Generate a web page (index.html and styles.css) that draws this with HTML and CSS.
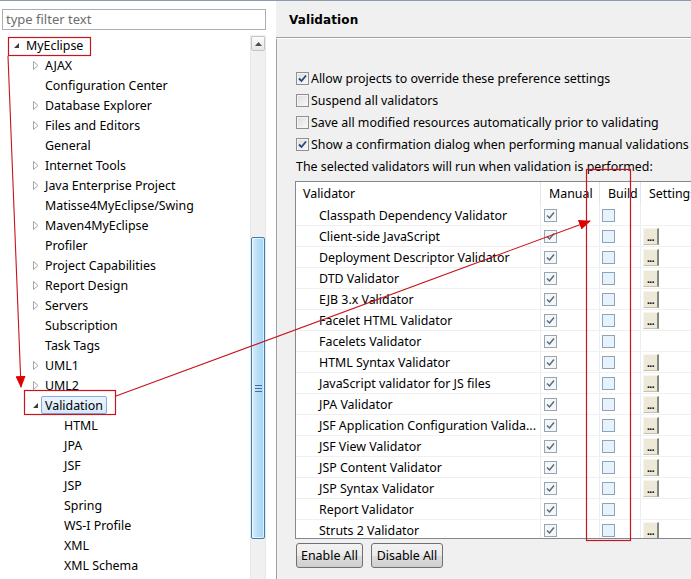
FILE: index.html
```html
<!DOCTYPE html>
<html>
<head>
<meta charset="utf-8">
<link rel="stylesheet" href="styles.css">
</head>
<body>
<div class="window">
  <aside class="nav">
    <div class="filter">type filter text</div>
    <div class="tree-wrap">
      <ul class="tree">
        <li class="row lvl0"><span class="twisty"><svg class="tw-open" width="7" height="7" viewBox="0 0 7 7"><path d="M6 1 L6 6 L1 6 Z" fill="#3c3c3c"/></svg></span><span class="lbl">MyEclipse</span></li>
        <li class="row lvl1"><span class="twisty"><svg class="tw-closed" width="6" height="9" viewBox="0 0 6 9"><path d="M0.5 0.5 L5 4.5 L0.5 8.5 Z" fill="#fff" stroke="#a5a5a5"/></svg></span><span class="lbl">AJAX</span></li>
        <li class="row lvl1"><span class="twisty"></span><span class="lbl">Configuration Center</span></li>
        <li class="row lvl1"><span class="twisty"><svg class="tw-closed" width="6" height="9" viewBox="0 0 6 9"><path d="M0.5 0.5 L5 4.5 L0.5 8.5 Z" fill="#fff" stroke="#a5a5a5"/></svg></span><span class="lbl">Database Explorer</span></li>
        <li class="row lvl1"><span class="twisty"><svg class="tw-closed" width="6" height="9" viewBox="0 0 6 9"><path d="M0.5 0.5 L5 4.5 L0.5 8.5 Z" fill="#fff" stroke="#a5a5a5"/></svg></span><span class="lbl">Files and Editors</span></li>
        <li class="row lvl1"><span class="twisty"></span><span class="lbl">General</span></li>
        <li class="row lvl1"><span class="twisty"><svg class="tw-closed" width="6" height="9" viewBox="0 0 6 9"><path d="M0.5 0.5 L5 4.5 L0.5 8.5 Z" fill="#fff" stroke="#a5a5a5"/></svg></span><span class="lbl">Internet Tools</span></li>
        <li class="row lvl1"><span class="twisty"><svg class="tw-closed" width="6" height="9" viewBox="0 0 6 9"><path d="M0.5 0.5 L5 4.5 L0.5 8.5 Z" fill="#fff" stroke="#a5a5a5"/></svg></span><span class="lbl">Java Enterprise Project</span></li>
        <li class="row lvl1"><span class="twisty"></span><span class="lbl">Matisse4MyEclipse/Swing</span></li>
        <li class="row lvl1"><span class="twisty"><svg class="tw-closed" width="6" height="9" viewBox="0 0 6 9"><path d="M0.5 0.5 L5 4.5 L0.5 8.5 Z" fill="#fff" stroke="#a5a5a5"/></svg></span><span class="lbl">Maven4MyEclipse</span></li>
        <li class="row lvl1"><span class="twisty"></span><span class="lbl">Profiler</span></li>
        <li class="row lvl1"><span class="twisty"><svg class="tw-closed" width="6" height="9" viewBox="0 0 6 9"><path d="M0.5 0.5 L5 4.5 L0.5 8.5 Z" fill="#fff" stroke="#a5a5a5"/></svg></span><span class="lbl">Project Capabilities</span></li>
        <li class="row lvl1"><span class="twisty"><svg class="tw-closed" width="6" height="9" viewBox="0 0 6 9"><path d="M0.5 0.5 L5 4.5 L0.5 8.5 Z" fill="#fff" stroke="#a5a5a5"/></svg></span><span class="lbl">Report Design</span></li>
        <li class="row lvl1"><span class="twisty"><svg class="tw-closed" width="6" height="9" viewBox="0 0 6 9"><path d="M0.5 0.5 L5 4.5 L0.5 8.5 Z" fill="#fff" stroke="#a5a5a5"/></svg></span><span class="lbl">Servers</span></li>
        <li class="row lvl1"><span class="twisty"></span><span class="lbl">Subscription</span></li>
        <li class="row lvl1"><span class="twisty"></span><span class="lbl">Task Tags</span></li>
        <li class="row lvl1"><span class="twisty"><svg class="tw-closed" width="6" height="9" viewBox="0 0 6 9"><path d="M0.5 0.5 L5 4.5 L0.5 8.5 Z" fill="#fff" stroke="#a5a5a5"/></svg></span><span class="lbl">UML1</span></li>
        <li class="row lvl1"><span class="twisty"><svg class="tw-closed" width="6" height="9" viewBox="0 0 6 9"><path d="M0.5 0.5 L5 4.5 L0.5 8.5 Z" fill="#fff" stroke="#a5a5a5"/></svg></span><span class="lbl">UML2</span></li>
        <li class="row lvl1"><span class="twisty"><svg class="tw-open" width="7" height="7" viewBox="0 0 7 7"><path d="M6 1 L6 6 L1 6 Z" fill="#3c3c3c"/></svg></span><span class="lbl selected">Validation</span></li>
        <li class="row lvl2"><span class="lbl">HTML</span></li>
        <li class="row lvl2"><span class="lbl">JPA</span></li>
        <li class="row lvl2"><span class="lbl">JSF</span></li>
        <li class="row lvl2"><span class="lbl">JSP</span></li>
        <li class="row lvl2"><span class="lbl">Spring</span></li>
        <li class="row lvl2"><span class="lbl">WS-I Profile</span></li>
        <li class="row lvl2"><span class="lbl">XML</span></li>
        <li class="row lvl2"><span class="lbl">XML Schema</span></li>
      </ul>
      <div class="vscroll">
        <div class="sb-up"><svg width="7" height="4" viewBox="0 0 7 4"><path d="M0 4 L3.5 0 L7 4 Z" fill="#4d4d4d"/></svg></div>
        <div class="sb-thumb"><span class="grip"></span></div>
      </div>
    </div>
  </aside>

  <main class="page">
    <header class="page-head"><h1 class="page-title">Validation</h1></header>
    <div class="page-body">
      <div class="opt"><span class="cb checked"><svg width="9" height="9" viewBox="0 0 9 9"><path d="M1 4.5 L3.5 7 L8 1.5" fill="none" stroke="#24487a" stroke-width="1.8"/></svg></span>Allow projects to override these preference settings</div>
      <div class="opt"><span class="cb"></span>Suspend all validators</div>
      <div class="opt"><span class="cb"></span>Save all modified resources automatically prior to validating</div>
      <div class="opt"><span class="cb checked"><svg width="9" height="9" viewBox="0 0 9 9"><path d="M1 4.5 L3.5 7 L8 1.5" fill="none" stroke="#24487a" stroke-width="1.8"/></svg></span>Show a confirmation dialog when performing manual validations</div>
      <div class="opt">The selected validators will run when validation is performed:</div>

      <div class="table">
        <div class="thead">
          <div class="th">Validator</div>
          <div class="th">Manual</div>
          <div class="th">Build</div>
          <div class="th">Settings</div>
        </div>
        <div class="tbody" id="tbody"></div>
      </div>

      <div class="actions">
        <button class="btn">Enable All</button>
        <button class="btn">Disable All</button>
      </div>
    </div>
  </main>

  <svg class="annot" width="691" height="579" viewBox="0 0 691 579">
    <defs>
      <marker id="ah" markerWidth="12" markerHeight="10" refX="11" refY="5" orient="auto" markerUnits="userSpaceOnUse">
        <path d="M0 0 L12 5 L0 10 Z" fill="#e00000"/>
      </marker>
    </defs>
    <rect x="8.5" y="37.5" width="82" height="18" fill="none" stroke="#c8141e" stroke-width="1.2"/>
    <line x1="8" y1="56" x2="21" y2="387" stroke="#c8141e" stroke-width="1.1" marker-end="url(#ah)"/>
    <rect x="24.5" y="390.5" width="91" height="24" fill="none" stroke="#c8141e" stroke-width="1.2"/>
    <line x1="116" y1="396" x2="590" y2="221" stroke="#c8141e" stroke-width="1.1" marker-end="url(#ah)"/>
    <rect x="586.5" y="169.5" width="44" height="371" fill="none" stroke="#c8141e" stroke-width="1.2"/>
  </svg>
</div>
<script src="app.js"></script>
</body>
</html>
```

FILE: app.js
```js
var rows = [
  ["Classpath Dependency Validator", false],
  ["Client-side JavaScript", true],
  ["Deployment Descriptor Validator", true],
  ["DTD Validator", true],
  ["EJB 3.x Validator", true],
  ["Facelet HTML Validator", true],
  ["Facelets Validator", false],
  ["HTML Syntax Validator", true],
  ["JavaScript validator for JS files", true],
  ["JPA Validator", true],
  ["JSF Application Configuration Valida...", true],
  ["JSF View Validator", true],
  ["JSP Content Validator", true],
  ["JSP Syntax Validator", true],
  ["Report Validator", false],
  ["Struts 2 Validator", true]
];
var check = '<svg width="9" height="9" viewBox="0 0 9 9"><path d="M1 4.5 L3.5 7 L8 1.5" fill="none" stroke="#5b6b7c" stroke-width="1.5"/></svg>';
var html = "";
rows.forEach(function (r) {
  html += '<div class="tr">' +
    '<div class="td name">' + r[0] + '</div>' +
    '<div class="td"><span class="tcb on">' + check + '</span></div>' +
    '<div class="td"><span class="tcb off"></span></div>' +
    '<div class="td">' + (r[1] ? '<span class="dots">...</span>' : '') + '</div>' +
    '</div>';
});
document.getElementById("tbody").innerHTML = html;
```

FILE: styles.css
```css
* { box-sizing: border-box; }
html, body { margin: 0; padding: 0; }
body {
  width: 691px;
  height: 579px;
  overflow: hidden;
  font-family: "Noto Sans", "Open Sans", sans-serif;
  font-size: 12.4px;
  color: #000;
  background: #f0f0f0;
}
.window {
  position: relative;
  display: flex;
  width: 691px;
  height: 579px;
  border-top: 1px solid #8c9cac;
}

/* ---------- left navigation ---------- */
.nav {
  width: 276px;
  flex: none;
  background: #fff;
  padding-top: 8px;
  display: flex;
  flex-direction: column;
}
.filter {
  margin-left: 2px;
  width: 264px;
  height: 21px;
  border: 1px solid #abadb3;
  padding-left: 3px;
  line-height: 19px;
  font-size: 13px;
  color: #6d6d6d;
}
.tree-wrap {
  margin-top: 5px;
  flex: 1;
  display: flex;
  min-height: 0;
}
.tree {
  list-style: none;
  margin: 0;
  padding: 0;
  width: 250px;
}
.row {
  height: 20px;
  display: flex;
  align-items: center;
  white-space: nowrap;
  font-size: 12.4px;
}
.lvl0 { padding-left: 12px; }
.lvl1 { padding-left: 31px; }
.lvl2 { padding-left: 64px; }
.twisty {
  width: 14px;
  flex: none;
  display: flex;
  align-items: center;
}
.lvl0 .twisty { padding-left: 1px; }
.lvl1 .twisty { padding-left: 2px; }
.lvl1 .twisty .tw-open { margin-left: -1px; }
.lbl { line-height: 16px; padding-top: 1px; }
.lbl.selected {
  margin-left: -4px;
  padding: 1px 3px 0;
  height: 18px;
  line-height: 16px;
  border: 1px solid #84acdd;
  border-radius: 2px;
  background: linear-gradient(#ebf4fd, #d9e9fb);
}

.vscroll {
  width: 16px;
  flex: none;
  background: #f0f0f0;
  border-left: 1px solid #e8e8e8;
  border-right: 1px solid #e8e8e8;
  display: flex;
  flex-direction: column;
  align-items: center;
}
.sb-up {
  margin-top: 1px;
  width: 14px;
  height: 15px;
  border: 1px solid #c5c5c5;
  border-radius: 2px;
  background: linear-gradient(#fdfdfd, #e6e6e6);
  display: flex;
  align-items: center;
  justify-content: center;
}
.sb-thumb {
  margin-top: 186px;
  width: 14px;
  height: 302px;
  border: 1px solid #3c7fb1;
  border-radius: 2px;
  background: linear-gradient(90deg, #d9edfb, #b8def7 50%, #a9d5f4);
  box-shadow: inset 0 0 0 1px rgba(255,255,255,0.6);
  display: flex;
  align-items: center;
  justify-content: center;
}
.grip {
  width: 7px;
  height: 7px;
  border-top: 1px solid #3d6e99;
  border-bottom: 1px solid #3d6e99;
  background: linear-gradient(#3d6e99, #3d6e99) center / 100% 1px no-repeat;
}

/* ---------- right page ---------- */
.page {
  flex: 1;
  min-width: 0;
  display: flex;
  flex-direction: column;
}
.page-head {
  height: 37px;
  flex: none;
  border-bottom: 1px solid #a0a0a0;
  box-shadow: 0 1px 0 #fff;
  padding-left: 13px;
  display: flex;
  align-items: center;
  padding-top: 1px;
}
.page-title {
  margin: 0;
  font-family: "DejaVu Sans", sans-serif;
  font-weight: bold;
  font-size: 12px;
  letter-spacing: 0.1px;
}
.page-body {
  flex: 1;
  margin-top: 1px;
  border-left: 1px solid #a0a0a0;
  padding-left: 19px;
  padding-top: 28px;
  overflow: hidden;
}
.opt {
  height: 22px;
  display: flex;
  align-items: center;
  white-space: nowrap;
  font-size: 12.4px;
}
.cb {
  width: 13px;
  height: 13px;
  flex: none;
  margin-right: 2px;
  border: 1px solid #8f8f8f;
  background: linear-gradient(135deg, #dcdcdc, #fafafa);
  box-shadow: inset 0 0 0 1px #f4f4f4;
  display: flex;
  align-items: center;
  justify-content: center;
}

/* ---------- table ---------- */
.table {
  margin-top: 4px;
  margin-left: -1px;
  width: 430px;
  height: 358px;
  border: 1px solid #828790;
  background: #fff;
  overflow: hidden;
}
.thead, .tr {
  display: grid;
  grid-template-columns: 245px 59px 41px 84px;
}
.thead { height: 23px; }
.th {
  padding-left: 7px;
  padding-top: 1px;
  line-height: 22px;
  border-right: 1px solid #e5e5e5;
  white-space: nowrap;
}
.th + .th { padding-left: 8px; }
.tr {
  height: 21px;
  border-bottom: 1px solid #f0f0f0;
}
.td {
  border-right: 1px solid #e9eef5;
  display: flex;
  align-items: center;
  padding-left: 2px;
  white-space: nowrap;
  overflow: hidden;
}
.td.name { padding-left: 23px; padding-top: 1px; }
.tr .td:nth-child(2) { padding-left: 3px; }
.tcb {
  width: 13px;
  height: 13px;
  border: 1px solid #8ea0b4;
  display: flex;
  align-items: center;
  justify-content: center;
}
.tcb.on { background: #f4f6f8; border-color: #97a5b4; }
.tcb.off { background: #e6f2fc; border-color: #8ea3ba; }
.dots {
  width: 16px;
  height: 17px;
  background: #ece9d8;
  border-top: 1px solid #f7f5ee;
  border-left: 1px solid #f7f5ee;
  border-right: 2px solid #8a887e;
  border-bottom: 1px solid #c5c2b2;
  font-size: 10px;
  font-weight: bold;
  line-height: 16px;
  text-align: center;
  letter-spacing: -0.5px;
}

/* ---------- buttons ---------- */
.actions {
  margin-top: 4px;
  display: flex;
  gap: 8px;
}
.btn {
  height: 25px;
  padding: 0;
  white-space: nowrap;
  font-family: "Noto Sans", "Open Sans", sans-serif;
  font-size: 12.4px;
  color: #000;
  border: 1px solid #707070;
  border-radius: 3px;
  background: linear-gradient(#f2f2f2 0%, #ebebeb 50%, #dddddd 51%, #cfcfcf 100%);
}
.btn:first-child { width: 67px; }
.btn:last-child { width: 72px; }

/* ---------- annotations ---------- */
.annot {
  position: absolute;
  left: 0;
  top: -1px;
  pointer-events: none;
}
```
